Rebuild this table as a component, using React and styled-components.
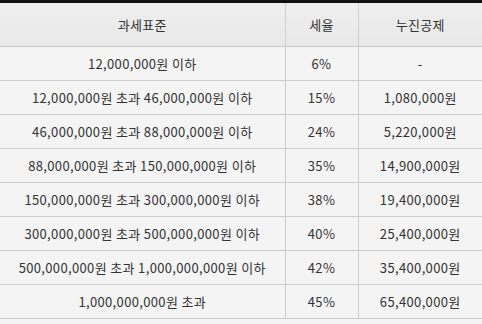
import React from "react";
import styled, { createGlobalStyle } from "styled-components";

const GlobalStyle = createGlobalStyle`
  html, body {
    margin: 0;
    padding: 0;
    background: #f4f4f4;
  }
  body {
    font-family: "Noto Sans CJK KR", "Noto Sans", sans-serif;
  }
`;

const rows = [
  ["12,000,000원 이하", "6%", "-"],
  ["12,000,000원 초과 46,000,000원 이하", "15%", "1,080,000원"],
  ["46,000,000원 초과 88,000,000원 이하", "24%", "5,220,000원"],
  ["88,000,000원 초과 150,000,000원 이하", "35%", "14,900,000원"],
  ["150,000,000원 초과 300,000,000원 이하", "38%", "19,400,000원"],
  ["300,000,000원 초과 500,000,000원 이하", "40%", "25,400,000원"],
  ["500,000,000원 초과 1,000,000,000원 이하", "42%", "35,400,000원"],
  ["1,000,000,000원 초과", "45%", "65,400,000원"],
];

const Table = styled.table`
  width: 482px;
  border-collapse: collapse;
  table-layout: fixed;
  border-top: 3px solid #111;
  color: #333;
  font-size: 13px;
  letter-spacing: 0.35px;
`;

const HeadCell = styled.th`
  height: 43px;
  padding: 0;
  font-weight: 400;
  text-align: center;
  background: linear-gradient(#eeeeee, #e8e8e8);
  border-bottom: 1px solid #c9c9c9;
  border-left: ${(p) => (p.$first ? "none" : "1px solid #d0d0d0")};
`;

const Cell = styled.td`
  height: 33px;
  padding: 0;
  text-align: center;
  background: #f4f4f4;
  border-bottom: 1px solid #cccccc;
  border-left: ${(p) => (p.$first ? "none" : "1px solid #cccccc")};
  white-space: nowrap;
`;

export default function App() {
  return (
    <>
      <GlobalStyle />
      <Table>
        <colgroup>
          <col style={{ width: 285 }} />
          <col style={{ width: 73 }} />
          <col style={{ width: 124 }} />
        </colgroup>
        <thead>
          <tr>
            <HeadCell $first>과세표준</HeadCell>
            <HeadCell>세율</HeadCell>
            <HeadCell>누진공제</HeadCell>
          </tr>
        </thead>
        <tbody>
          {rows.map((r) => (
            <tr key={r[0]}>
              <Cell $first>{r[0]}</Cell>
              <Cell>{r[1]}</Cell>
              <Cell>{r[2]}</Cell>
            </tr>
          ))}
        </tbody>
      </Table>
    </>
  );
}
